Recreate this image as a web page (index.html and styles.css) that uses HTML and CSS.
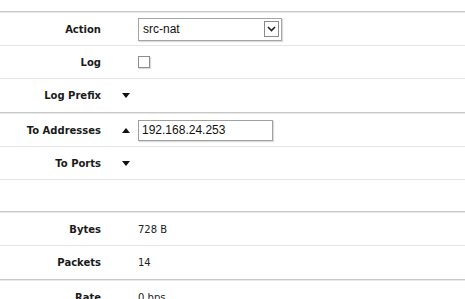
FILE: index.html
```html
<!DOCTYPE html>
<html lang="en">
<head>
  <meta charset="UTF-8" />
  <title>NAT Rule</title>
  <link rel="stylesheet" href="styles.css">
</head>
<body>
  <div class="form">
    <div class="sep"></div>

    <div class="row">
      <div class="label">Action</div>
      <div class="toggle"></div>
      <div class="value">
        <div class="select">
          <span class="select-text">src-nat</span>
          <span class="drop">
            <svg width="9" height="6" viewBox="0 0 9 6"><path d="M1 1 L4.5 4.5 L8 1" fill="none" stroke="#222" stroke-width="1.6"/></svg>
          </span>
        </div>
      </div>
    </div>

    <div class="row">
      <div class="label">Log</div>
      <div class="toggle"></div>
      <div class="value"><span class="checkbox"></span></div>
    </div>

    <div class="row no-border">
      <div class="label">Log Prefix</div>
      <div class="toggle">
        <svg width="8" height="5" viewBox="0 0 8 5"><polygon points="0,0 8,0 4,5" fill="#111"/></svg>
      </div>
      <div class="value"></div>
    </div>

    <div class="sep"></div>

    <div class="row">
      <div class="label">To Addresses</div>
      <div class="toggle">
        <svg width="8" height="5" viewBox="0 0 8 5"><polygon points="0,5 8,5 4,0" fill="#111"/></svg>
      </div>
      <div class="value"><input class="text-input" type="text" value="192.168.24.253"></div>
    </div>

    <div class="row">
      <div class="label">To Ports</div>
      <div class="toggle">
        <svg width="8" height="5" viewBox="0 0 8 5"><polygon points="0,0 8,0 4,5" fill="#111"/></svg>
      </div>
      <div class="value"></div>
    </div>

    <div class="spacer"></div>
    <div class="sep"></div>

    <div class="row">
      <div class="label">Bytes</div>
      <div class="toggle"></div>
      <div class="value">728 B</div>
    </div>

    <div class="row no-border">
      <div class="label">Packets</div>
      <div class="toggle"></div>
      <div class="value">14</div>
    </div>

    <div class="sep"></div>

    <div class="row">
      <div class="label">Rate</div>
      <div class="toggle"></div>
      <div class="value">0 bps</div>
    </div>
  </div>
</body>
</html>
```

FILE: styles.css
```css
* {
  box-sizing: border-box;
}

body {
  margin: 0;
  background: #fff;
  color: #222;
  font-family: "DejaVu Sans", Verdana, sans-serif;
  font-size: 10px;
}

.form {
  padding-top: 11px;
}

.sep {
  height: 2px;
  border-top: 1px solid #c8c8c8;
  background: #e8e8e8;
}

.row {
  display: grid;
  grid-template-columns: 101px 37px 1fr;
  align-items: center;
  height: 33px;
  border-bottom: 1px solid #e6e6e6;
}

.row.no-border {
  border-bottom: none;
}

.spacer {
  height: 31px;
}

.label {
  text-align: right;
  font-weight: bold;
  color: #1a1a1a;
}

.toggle {
  display: flex;
  align-items: center;
  padding-left: 21px;
}

.value {
  display: flex;
  align-items: center;
  color: #222;
}

.select {
  display: flex;
  align-items: center;
  justify-content: space-between;
  width: 144px;
  height: 23px;
  border: 1px solid #a5a5a5;
  box-shadow: 1px 1px 1px #dcdcdc;
  padding: 0 2px 0 4px;
  font-family: "Liberation Sans", Arial, sans-serif;
  font-size: 12px;
  color: #111;
}

.drop {
  display: flex;
  align-items: center;
  justify-content: center;
  width: 15px;
  height: 16px;
  border: 1px solid #8a8a8a;
  background: #fff;
}

.checkbox {
  display: block;
  width: 12px;
  height: 12px;
  border: 1px solid #8d8d8d;
  box-shadow: 1px 1px 1px #dcdcdc;
  background: #fff;
}

.text-input {
  width: 135px;
  height: 21px;
  margin: 0;
  padding: 0 3px;
  border: 1px solid #a0a0a0;
  box-shadow: 1px 1px 1px #dcdcdc;
  font-family: "Liberation Sans", Arial, sans-serif;
  font-size: 12px;
  color: #111;
  outline: none;
}
```
